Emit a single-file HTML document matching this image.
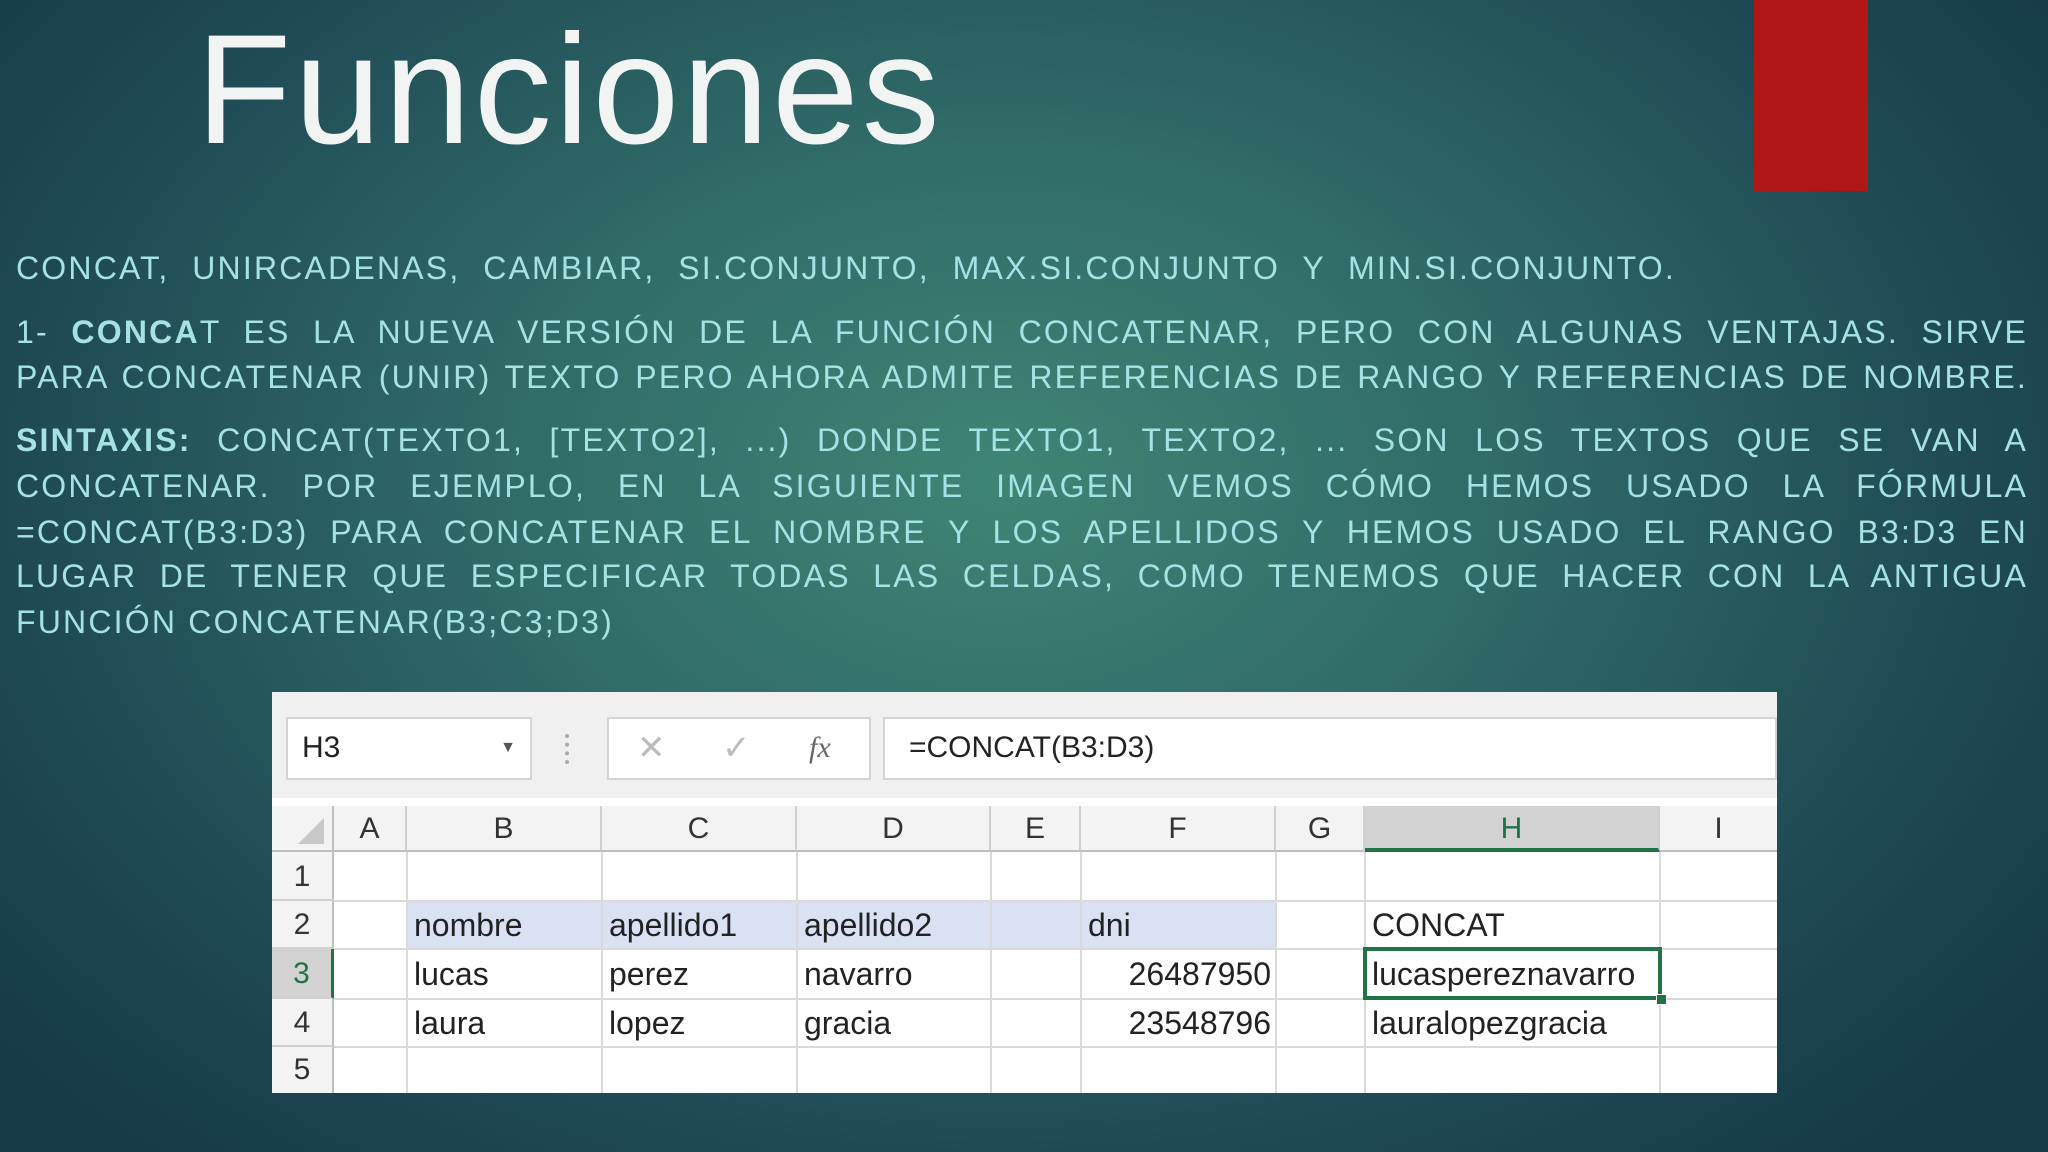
<!DOCTYPE html>
<html><head><meta charset="utf-8"><style>
*{margin:0;padding:0;box-sizing:border-box}
body{width:2048px;height:1152px;overflow:hidden;position:relative;font-family:"Liberation Sans",sans-serif;
background:radial-gradient(ellipse 1300px 900px at 1000px 480px,#3f8574 0%,#2f6a67 40%,#1f4a55 75%,#173a48 100%);}
.title{position:absolute;left:196px;top:0px;font-size:156px;color:#f2f4f4;line-height:180px;letter-spacing:3px}
.red{position:absolute;left:1754px;top:0;width:114px;height:191px;background:#b01717}
.ln{position:absolute;left:16px;width:2012px;color:#a4e2e4;font-size:32px;line-height:40px;text-align:justify;text-align-last:justify;white-space:nowrap;overflow:visible;letter-spacing:2.2px}
b{font-weight:bold}
.xl{position:absolute;left:272px;top:692px;width:1505px;height:401px;background:#fff;font-family:"Liberation Sans Narrow","Liberation Sans",sans-serif;color:#222}
.bar{position:absolute;left:0;top:0;width:1505px;height:106px;background:#f0f0f0}
.box{position:absolute;background:#fff;border:2px solid #d4d4d4;font-size:30px;line-height:58px}
.cell{position:absolute;font-size:32px;line-height:48px;padding-left:7px;overflow:hidden;white-space:nowrap}
.hdr{position:absolute;top:114px;height:46px;border-right:2px solid #d0d0d0;border-bottom:2px solid #bfbfbf;background:#f3f3f3;text-align:center;font-size:30px;line-height:46px;color:#333}
.rh{position:absolute;left:0;width:62px;border-bottom:2px solid #d0d0d0;border-right:2px solid #bfbfbf;background:#f3f3f3;text-align:center;font-size:30px;color:#333}
.vl{position:absolute;top:160px;width:2px;height:241px;background:#dadada}
.hl{position:absolute;left:62px;height:2px;width:1443px;background:#dadada}
</style></head><body>
<div class="title">Funciones</div>
<div class="red"></div>
<div class="ln" style="top:248px;width:1660px">CONCAT, UNIRCADENAS, CAMBIAR, SI.CONJUNTO, MAX.SI.CONJUNTO Y MIN.SI.CONJUNTO.</div>
<div class="ln" style="top:312px">1- <b>CONCA</b>T ES LA NUEVA VERSIÓN DE LA FUNCIÓN CONCATENAR, PERO CON ALGUNAS VENTAJAS. SIRVE</div>
<div class="ln" style="top:357px">PARA CONCATENAR (UNIR) TEXTO PERO AHORA ADMITE REFERENCIAS DE RANGO Y REFERENCIAS DE NOMBRE.</div>
<div class="ln" style="top:420px"><b>SINTAXIS:</b> CONCAT(TEXTO1, [TEXTO2], ...) DONDE TEXTO1, TEXTO2, ... SON LOS TEXTOS QUE SE VAN A</div>
<div class="ln" style="top:466px">CONCATENAR. POR EJEMPLO, EN LA SIGUIENTE IMAGEN VEMOS CÓMO HEMOS USADO LA FÓRMULA</div>
<div class="ln" style="top:512px">=CONCAT(B3:D3) PARA CONCATENAR EL NOMBRE Y LOS APELLIDOS Y HEMOS USADO EL RANGO B3:D3 EN</div>
<div class="ln" style="top:556px">LUGAR DE TENER QUE ESPECIFICAR TODAS LAS CELDAS, COMO TENEMOS QUE HACER CON LA ANTIGUA</div>
<div class="ln" style="top:602px;text-align-last:left">FUNCIÓN CONCATENAR(B3;C3;D3)</div>

<div class="xl">
<div class="bar"></div>
<div class="box" style="left:14px;top:25px;width:246px;height:63px;padding-left:14px">H3<span style="position:absolute;right:14px;top:0;font-size:16px;color:#555">▼</span></div>
<div style="position:absolute;left:293px;top:42px;width:4px;height:30px;border-left:4px dotted #aaa"></div>
<div class="box" style="left:335px;top:25px;width:264px;height:63px;color:#bbb;font-size:34px"><span style="position:absolute;left:28px">✕</span><span style="position:absolute;left:113px">✓</span><span style="position:absolute;left:200px;color:#666;font-family:'Liberation Serif',serif;font-style:italic;font-size:30px">fx</span></div>
<div class="box" style="left:611px;top:25px;width:894px;height:63px;padding-left:24px">=CONCAT(B3:D3)</div>
<div style="position:absolute;left:0;top:114px;width:62px;height:46px;background:#f3f3f3;border-right:2px solid #bfbfbf;border-bottom:2px solid #bfbfbf"><div style="position:absolute;right:8px;bottom:6px;width:0;height:0;border-left:26px solid transparent;border-bottom:26px solid #c8c8c8"></div></div>
<div class="hdr" style="left:62px;width:73px">A</div>
<div class="hdr" style="left:135px;width:195px">B</div>
<div class="hdr" style="left:330px;width:195px">C</div>
<div class="hdr" style="left:525px;width:194px">D</div>
<div class="hdr" style="left:719px;width:90px">E</div>
<div class="hdr" style="left:809px;width:195px">F</div>
<div class="hdr" style="left:1004px;width:89px">G</div>
<div class="hdr" style="left:1093px;width:295px;background:#d2d2d2;border-bottom:4px solid #217346;color:#217346">H</div>
<div class="hdr" style="left:1388px;width:117px;border-right:none">I</div>
<div class="rh" style="top:160px;height:49px;line-height:49px">1</div>
<div class="rh" style="top:209px;height:48px;line-height:48px">2</div>
<div class="rh" style="top:257px;height:50px;line-height:50px;background:#d2d2d2;color:#217346;border-right:3px solid #217346">3</div>
<div class="rh" style="top:307px;height:48px;line-height:48px">4</div>
<div class="rh" style="top:355px;height:46px;line-height:46px;border-bottom:none">5</div>
<div style="position:absolute;left:135px;top:209px;width:869px;height:48px;background:#d9e1f2"></div>
<div class="vl" style="left:134px"></div><div class="vl" style="left:329px"></div><div class="vl" style="left:524px"></div><div class="vl" style="left:718px"></div><div class="vl" style="left:808px"></div><div class="vl" style="left:1003px"></div><div class="vl" style="left:1092px"></div><div class="vl" style="left:1387px"></div>
<div class="hl" style="top:208px"></div><div class="hl" style="top:256px"></div><div class="hl" style="top:306px"></div><div class="hl" style="top:354px"></div>
<div class="cell" style="left:135px;top:209px">nombre</div>
<div class="cell" style="left:330px;top:209px">apellido1</div>
<div class="cell" style="left:525px;top:209px">apellido2</div>
<div class="cell" style="left:809px;top:209px">dni</div>
<div class="cell" style="left:1093px;top:209px">CONCAT</div>
<div class="cell" style="left:135px;top:258px">lucas</div>
<div class="cell" style="left:330px;top:258px">perez</div>
<div class="cell" style="left:525px;top:258px">navarro</div>
<div class="cell" style="left:809px;top:258px;width:190px;text-align:right">26487950</div>
<div class="cell" style="left:135px;top:307px">laura</div>
<div class="cell" style="left:330px;top:307px">lopez</div>
<div class="cell" style="left:525px;top:307px">gracia</div>
<div class="cell" style="left:809px;top:307px;width:190px;text-align:right">23548796</div>
<div class="cell" style="left:1093px;top:307px">lauralopezgracia</div>
<div style="position:absolute;left:1091px;top:255px;width:299px;height:53px;border:4px solid #217346"></div>
<div class="cell" style="left:1093px;top:258px;width:296px">lucaspereznavarro</div>
<div style="position:absolute;left:1384px;top:302px;width:11px;height:11px;background:#217346;border:1px solid #fff"></div>
</div>
</body></html>
